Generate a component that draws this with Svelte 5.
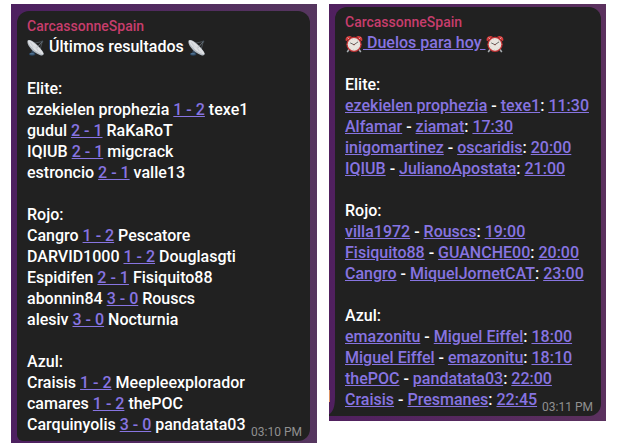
<script>
  const link = (t) => ({ t, a: true });
  const results = [
    ['Elite:', [
      ['ezekielen prophezia', '1 - 2', 'texe1'],
      ['gudul', '2 - 1', 'RaKaRoT'],
      ['IQIUB', '2 - 1', 'migcrack'],
      ['estroncio', '2 - 1', 'valle13']
    ]],
    ['Rojo:', [
      ['Cangro', '1 - 2', 'Pescatore'],
      ['DARVID1000', '1 - 2', 'Douglasgti'],
      ['Espidifen', '2 - 1', 'Fisiquito88'],
      ['abonnin84', '3 - 0', 'Rouscs'],
      ['alesiv', '3 - 0', 'Nocturnia']
    ]],
    ['Azul:', [
      ['Craisis', '1 - 2', 'Meepleexplorador'],
      ['camares', '1 - 2', 'thePOC'],
      ['Carquinyolis', '3 - 0', 'pandatata03']
    ]]
  ];
  const duels = [
    ['Elite:', [
      ['ezekielen prophezia', 'texe1', '11:30'],
      ['Alfamar', 'ziamat', '17:30'],
      ['inigomartinez', 'oscaridis', '20:00'],
      ['IQIUB', 'JulianoApostata', '21:00']
    ]],
    ['Rojo:', [
      ['villa1972', 'Rouscs', '19:00'],
      ['Fisiquito88', 'GUANCHE00', '20:00'],
      ['Cangro', 'MiquelJornetCAT', '23:00']
    ]],
    ['Azul:', [
      ['emazonitu', 'Miguel Eiffel', '18:00'],
      ['Miguel Eiffel', 'emazonitu', '18:10'],
      ['thePOC', 'pandatata03', '22:00'],
      ['Craisis', 'Presmanes', '22:45']
    ]]
  ];
  const parts = {
    results: ([a, s, b]) => [{ t: a + ' ' }, link(s), { t: ' ' + b }],
    duels: ([a, b, h]) => [link(a), { t: ' - ' }, link(b), { t: ': ' }, link(h)]
  };
</script>

{#snippet dish()}
  <svg class="emoji" viewBox="0 0 20 20" aria-hidden="true">
    <path d="M6 12 4 16.5h5l-1-4z" fill="#35495d" />
    <ellipse cx="5.8" cy="16.8" rx="3.6" ry="1.7" fill="#29435e" />
    <path d="M3.5 16.5h4" stroke="#6b92b1" />
    <path d="M7 5 17 2.7 14.5 12M10 10l7-7" fill="none" stroke="#59636b" stroke-width=".8" />
    <circle cx="17" cy="2.8" r="1.1" fill="#424b54" />
    <path d="M.7 1.7C-1 5 5 14.8 14.8 18c2.7.9 4.3-.7 3.6-2.5C15.5 9.4 3.8-1.7.7 1.7Z" fill="#b4bbc3" />
    <path d="M1.2 1.9C4-.1 15 9.6 18 15.5c.5 1.2-.3 1.8-1.7 1.3C9.5 15 .2 4.8 1.2 1.9Z" fill="#dfe1e4" />
    <path d="m3 3.5 12.5 12.3M4 3.7l3 6.5M10 7.5l2 6.5" stroke="#b0b7bf" stroke-width=".4" />
    <path d="M11.5 9.5 17 3" stroke="#77818a" stroke-width=".6" />
  </svg>
{/snippet}

{#snippet clock()}
  <svg class="emoji" viewBox="0 0 20 20" aria-hidden="true">
    <path d="m5 15-2.5 4M15 15l2.5 4" stroke="#a8adb0" stroke-width="1.8" />
    <path d="M1.3 7C-1 3.4 3.5-.8 7.5 1.8ZM18.7 7c2.3-3.6-2.2-7.8-6.2-5.2Z" fill="#d93c3c" />
    <path d="m3 2.8 3 3m11-3-3 3" stroke="#d9d4d4" stroke-width="1" />
    <circle cx="10" cy="10.4" r="8.5" fill="#c33335" />
    <circle cx="10" cy="10.4" r="7" fill="#e9e5df" />
    <circle cx="10" cy="10.4" r="5.8" fill="none" stroke="#b8b3ad" stroke-width=".7" stroke-dasharray=".6 2.44" />
    <path d="m5.8 8.8 4.2 2 4.5-3.2" fill="none" stroke="#454545" stroke-width=".9" />
    <circle cx="10" cy="10.7" r=".8" fill="#8e4441" />
  </svg>
{/snippet}

{#snippet groups(data, format)}
  {#each data as [name, rows]}
    <section>
      <div>{name}</div>
      {#each rows as row}
        <div>{#each format(row) as p}{#if p.a}<span class="link">{p.t}</span>{:else}{p.t}{/if}{/each}</div>
      {/each}
    </section>
  {/each}
{/snippet}

<main>
  <div class="panel left">
    <article>
      <header>CarcassonneSpain</header>
      <div class="title">{@render dish()}<span>{' Últimos resultados '}</span>{@render dish()}</div>
      {@render groups(results, parts.results)}
      <time>03:10 PM</time>
    </article>
  </div>
  <div class="panel right">
    <article>
      <header>CarcassonneSpain</header>
      <div class="title">{@render clock()}<span class="link">{' Duelos para hoy '}</span>{@render clock()}</div>
      {@render groups(duels, parts.duels)}
      <time>03:11 PM</time>
    </article>
    <svg class="tail" viewBox="0 0 7 19" aria-hidden="true"><path d="M6 0h1v19H0v-1.5C3.5 15 6 11 6 0Z" fill="#212121" /></svg>
    <i class="avatar"></i>
  </div>
</main>

<style>
  :global(body) { background: #fff; }
  main {
    display: flex;
    align-items: flex-start;
    gap: 12px;
    box-sizing: border-box;
    width: 621px;
    height: 448px;
    padding: 4px 0 0 11px;
    font: 500 16px/21px Roboto, sans-serif;
    color: #fff;
    overflow: hidden;
  }
  .panel { position: relative; display: flex; box-sizing: border-box; }
  .left {
    width: 306px;
    height: 439px;
    padding: 7px 7px 2px 6px;
    background: linear-gradient(to right, #4d2060, #56365f);
  }
  .right {
    width: 277px;
    height: 417px;
    padding: 3px 5px 5px 6px;
    background: linear-gradient(to right, #50205f, #5b315e);
  }
  article {
    position: relative;
    flex: 1;
    box-sizing: border-box;
    padding: 5px 0 0 10px;
    background: #212121;
    border-radius: 12px 12px 12px 6px;
    white-space: nowrap;
  }
  .right article { border-radius: 12px 12px 12px 0; }
  header { height: 20px; line-height: 20px; font-size: 14px; color: #c73d6c; }
  .title { display: flex; height: 21px; }
  .title span { white-space: pre; }
  .emoji { width: 18px; height: 18px; margin-top: 3px; flex: none; overflow: visible; }
  section { padding-top: 21px; }
  section div { height: 21px; white-space: pre; }
  .link {
    color: #8774e1;
    text-decoration: underline;
  }
  time {
    position: absolute;
    right: 8px;
    bottom: 0;
    font-size: 12px;
    line-height: 18px;
    font-weight: 400;
    color: #909090;
  }
  .tail { position: absolute; left: 0; bottom: 5px; width: 7px; height: 19px; }
  .avatar {
    position: absolute;
    left: 0;
    bottom: 19px;
    width: 1px;
    height: 12px;
    background: #d99062;
  }
</style>
